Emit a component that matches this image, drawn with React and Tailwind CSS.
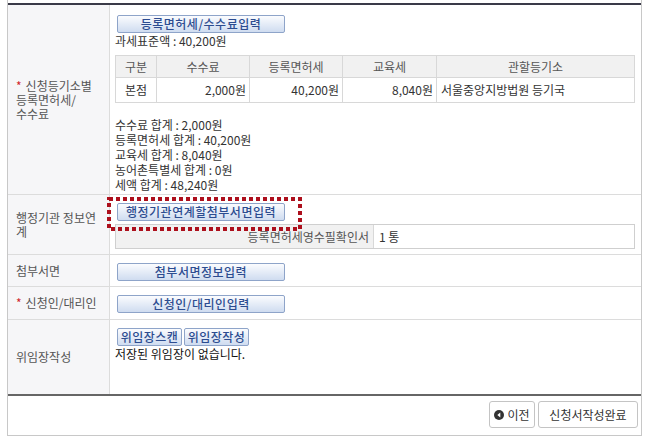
import React from 'react';

const blueBtn =
  "flex h-[18px] items-center justify-center rounded-[2px] border border-[#8ea4c9] bg-gradient-to-b from-[#fbfcfe] to-[#cfdcf0] text-[12px] leading-none font-medium tracking-[0.5px] text-[#2c4c90]";

function BlueButton({ children, className = '' }) {
  return <button className={`${blueBtn} ${className}`}>{children}</button>;
}

function Label({ required, children }) {
  return (
    <div className="flex w-[102px] shrink-0 items-center border-r border-[#dcdcdc] bg-[#f6f6f8] pl-[8px] pr-[2px] text-[12px] leading-[14px] whitespace-nowrap text-[#555]">
      <div>
        {required ? <span className="mr-[4px] text-[#d0262c]">*</span> : null}
        {children}
      </div>
    </div>
  );
}

function App() {
  const sums = [
    '수수료 합계 : 2,000원',
    '등록면허세 합계 : 40,200원',
    '교육세 합계 : 8,040원',
    '농어촌특별세 합계 : 0원',
    '세액 합계 : 48,240원',
  ];

  return (
    <div className="min-h-screen bg-white font-['Noto_Sans_CJK_KR',sans-serif] text-[#333]">
      <div className="ml-[7px] w-[635px] border-x border-b border-[#c8c8c8] pt-[3px]">
        {/* Form table */}
        <div className="border-t-2 border-b-2 border-t-[#3a3a48] border-b-[#666]">
          {/* Row 1 */}
          <div className="flex h-[190px] border-b border-[#dcdcdc]">
            <Label required>
              신청등기소별
              <br />
              등록면허세/
              <br />
              수수료
            </Label>
            <div className="flex-1 pl-[5px] pr-[6px] pt-[10px] text-[12px]">
              <BlueButton className="ml-[2px] w-[168px]">등록면허세/수수료입력</BlueButton>
              <p className="leading-[15px]">과세표준액 : 40,200원</p>
              <table className="mt-[7px] w-full border-collapse border border-[#cfcfcf]">
                <thead>
                  <tr className="h-[22px] bg-[#f1f1f1] text-[#555]">
                    <th className="w-[41px] border border-[#d8d8d8] font-normal">구분</th>
                    <th className="w-[93px] border border-[#d8d8d8] font-normal">수수료</th>
                    <th className="w-[93px] border border-[#d8d8d8] font-normal">등록면허세</th>
                    <th className="w-[94px] border border-[#d8d8d8] font-normal">교육세</th>
                    <th className="border border-[#d8d8d8] font-normal">관할등기소</th>
                  </tr>
                </thead>
                <tbody>
                  <tr className="h-[25px]">
                    <td className="border border-[#d8d8d8] text-center">본점</td>
                    <td className="border border-[#d8d8d8] pr-[3px] text-right">2,000원</td>
                    <td className="border border-[#d8d8d8] pr-[3px] text-right">40,200원</td>
                    <td className="border border-[#d8d8d8] pr-[3px] text-right">8,040원</td>
                    <td className="border border-[#d8d8d8] pl-[4px]">서울중앙지방법원 등기국</td>
                  </tr>
                </tbody>
              </table>
              <div className="mt-[14px] leading-[15px]">
                {sums.map((s) => (
                  <p key={s}>{s}</p>
                ))}
              </div>
            </div>
          </div>

          {/* Row 2 */}
          <div className="flex h-[60px] border-b border-[#dcdcdc]">
            <Label>
              행정기관 정보연
              <br />
              계
            </Label>
            <div className="flex-1 pl-[5px] pr-[6px] pt-[8px] text-[12px]">
              <div className="relative ml-[2px] w-[168px]">
                <BlueButton className="w-[168px]">행정기관연계할첨부서면입력</BlueButton>
                <svg
                  className="pointer-events-none absolute left-[-10px] top-[-6px] z-10"
                  width="195"
                  height="34"
                  viewBox="0 0 195 34"
                >
                  <rect
                    x="2"
                    y="2"
                    width="191"
                    height="30"
                    fill="none"
                    stroke="#ad0f1c"
                    strokeWidth="4"
                    strokeDasharray="4 3"
                  />
                </svg>
              </div>
              <div className="mt-[3px] flex h-[25px] border border-[#cfcfcf]">
                <div className="flex w-[258px] items-center justify-end border-r border-[#d8d8d8] bg-[#f1f1f1] pr-[4px] text-[#555]">
                  등록면허세영수필확인서
                </div>
                <div className="flex flex-1 items-center pl-[5px]">1 통</div>
              </div>
            </div>
          </div>

          {/* Row 3 */}
          <div className="flex h-[32px] border-b border-[#dcdcdc]">
            <Label>첨부서면</Label>
            <div className="flex-1 pl-[7px] pt-[8px]">
              <BlueButton className="w-[168px]">첨부서면정보입력</BlueButton>
            </div>
          </div>

          {/* Row 4 */}
          <div className="flex h-[33px] border-b border-[#dcdcdc]">
            <Label required>신청인/대리인</Label>
            <div className="flex-1 pl-[7px] pt-[8px]">
              <BlueButton className="w-[168px]">신청인/대리인입력</BlueButton>
            </div>
          </div>

          {/* Row 5 */}
          <div className="flex h-[74px]">
            <Label>위임장작성</Label>
            <div className="flex-1 pl-[5px] pt-[8px] text-[12px]">
              <div className="ml-[2px] flex gap-[2px]">
                <BlueButton className="w-[65px]">위임장스캔</BlueButton>
                <BlueButton className="w-[65px]">위임장작성</BlueButton>
              </div>
              <p className="leading-[15px] text-[#111]">저장된 위임장이 없습니다.</p>
            </div>
          </div>
        </div>

        {/* Bottom buttons */}
        <div className="flex justify-end gap-[3px] pr-[3px] pb-[7px] pt-[5px]">
          <button className="flex h-[27px] w-[46px] items-center justify-center gap-[3px] rounded-[3px] border border-[#c4c4c4] bg-white text-[12px] text-[#333]">
            <svg width="10" height="10" viewBox="0 0 10 10">
              <circle cx="5" cy="5" r="5" fill="#333" />
              <path d="M6.3 2.6 L3.3 5 L6.3 7.4 Z" fill="#fff" />
            </svg>
            이전
          </button>
          <button className="flex h-[27px] w-[100px] items-center justify-center rounded-[3px] border border-[#c4c4c4] bg-white text-[12px] text-[#333]">
            신청서작성완료
          </button>
        </div>
      </div>
    </div>
  );
}

export default App;
